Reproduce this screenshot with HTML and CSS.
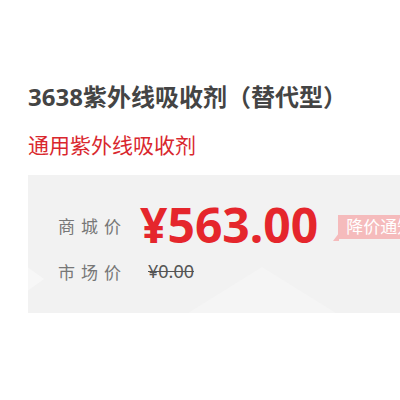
FILE: index.html
```html
<!DOCTYPE html>
<html lang="zh-CN">
<head>
    <meta charset="UTF-8">
    <title>3638紫外线吸收剂</title>
    <link rel="stylesheet" href="styles.css">
</head>
<body>
  <div class="item_info">
    <h1 class="item_name">3638紫外线吸收剂（替代型）</h1>
    <p class="item_sub">通用紫外线吸收剂</p>
    <div class="price_box">
      <div class="price_row">
        <span class="label">商城价</span>
        <span class="price">¥563.00</span>
        <span class="notice">降价通知</span>
      </div>
      <div class="price_row market">
        <span class="label">市场价</span>
        <span class="old_price">¥0.00</span>
      </div>
    </div>
  </div>
</body>
</html>
```

FILE: styles.css
```css
body {
  margin: 0;
  font-family: "Noto Sans", "Noto Sans CJK SC", sans-serif;
  background: #fff;
  overflow: hidden;
}
.item_info {
  padding: 79px 0 0 28px;
}
.item_name {
  margin: 0;
  font-size: 24px;
  line-height: 36px;
  font-weight: bold;
  color: #444;
  white-space: nowrap;
}
.item_sub {
  margin: 16px 0 0 0;
  font-size: 21px;
  line-height: 28px;
  color: #d9272e;
}
.price_box {
  position: relative;
  margin-top: 16px;
  height: 138px;
  padding: 22px 0 0 30px;
  box-sizing: border-box;
  background: #f2f2f2;
  overflow: hidden;
}
.price_box::before {
  content: "";
  position: absolute;
  left: 160px;
  bottom: 0;
  border-left: 74px solid transparent;
  border-right: 74px solid transparent;
  border-bottom: 46px solid #f5f5f5;
}
.price_box::after {
  content: "";
  position: absolute;
  left: -20px;
  top: 78px;
  border-top: 26px solid transparent;
  border-bottom: 26px solid transparent;
  border-left: 36px solid #f7f7f7;
}
.price_row {
  position: relative;
  z-index: 1;
  display: flex;
  align-items: center;
  white-space: nowrap;
}
.price_row span {
  flex-shrink: 0;
}
.label {
  width: 82px;
  font-size: 17px;
  letter-spacing: 6px;
  color: #777;
}
.price {
  font-size: 48px;
  line-height: 56px;
  font-weight: bold;
  color: #e5262c;
}
.notice {
  position: relative;
  margin-left: 20px;
  margin-top: 4px;
  padding: 0 8px;
  font-size: 17px;
  line-height: 24px;
  color: #fff;
  background: #f5bbbc;
}
.notice::before {
  content: "";
  position: absolute;
  left: -5px;
  bottom: -2px;
  border-top: 8px solid transparent;
  border-right: 6px solid #f5bbbc;
}
.market {
  margin-top: 5px;
}
.old_price {
  margin-left: 8px;
  font-size: 18px;
  line-height: 26px;
  color: #555;
  text-decoration: line-through;
}
```
